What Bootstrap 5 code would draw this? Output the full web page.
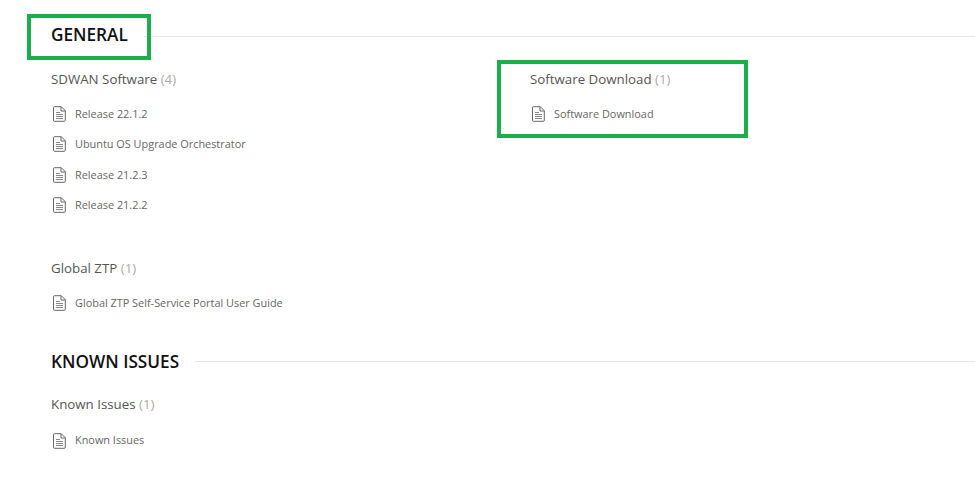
<!DOCTYPE html>
<html lang="en">
<head>
  <meta charset="UTF-8">
  <meta name="viewport" content="width=device-width, initial-scale=1.0">
  <title>Documentation</title>
  <link href="https://cdn.jsdelivr.net/npm/bootstrap@5.3.0/dist/css/bootstrap.min.css" rel="stylesheet">
  <style>
    body {
      background-color: #fff;
      font-family: "Open Sans", "Liberation Sans", sans-serif;
      overflow: hidden;
    }
    .doc-page {
      position: relative;
      height: 480px;
      padding: 22px 0 0 51px;
    }
    .sec-head {
      display: flex;
      align-items: center;
      gap: 16px;
      height: 26px;
    }
    .sec-head h2 {
      margin: 0;
      font-size: 17.2px;
      font-weight: 600;
      color: #111;
      white-space: nowrap;
    }
    .sec-head .sec-line {
      flex-grow: 1;
      height: 1px;
      margin-top: 2px;
      background-color: #e6e6e6;
    }
    .known-head { margin-top: 31px; }
    .known-head .sec-line { margin-top: -2px; }
    .cat-wrap { padding-top: 21px; }
    .cat-col {
      width: 479px;
      flex-shrink: 0;
    }
    .cat-title {
      margin: 0 0 10px;
      height: 20px;
      line-height: 20px;
      font-size: 13.3px;
      font-weight: 400;
      color: #555;
    }
    .cat-title span {
      color: #aaa;
    }
    .global-ztp { margin-top: 38px; margin-bottom: 10px; }
    .known-list { margin-top: 19px; }
    .known-list .cat-title { margin-bottom: 11px; }
    .art-row {
      display: flex;
      align-items: center;
      gap: 9px;
      height: 30.3px;
      font-size: 10.9px;
      color: #666;
    }
    .art-row svg {
      flex-shrink: 0;
      margin-left: 2px;
    }
    .green-box {
      position: absolute;
      border: 4px solid #1bae4b;
    }
    .box-general {
      left: 27px;
      top: 14px;
      width: 124px;
      height: 46px;
    }
    .box-download {
      left: 497px;
      top: 60px;
      width: 251px;
      height: 78px;
    }
  </style>
</head>
<body>
<svg width="0" height="0" class="d-block">
  <symbol id="doc-icon" viewBox="0 0 13 16">
    <path d="M1.5 .7H8.3L12.3 4.7V14.3a1 1 0 0 1-1 1H1.5a1 1 0 0 1-1-1V1.7a1 1 0 0 1 1-1Z" fill="#fff" stroke="#666" stroke-width="1"/>
    <path d="M8 .8V5H12.2" fill="none" stroke="#666" stroke-width="1"/>
    <path d="M3 6.5H7M3 8.5H10M3 10.5H10M3 12.5H10" fill="none" stroke="#888" stroke-width="1"/>
  </symbol>
</svg>
<div class="doc-page">
  <div class="sec-head">
    <h2>GENERAL</h2>
    <div class="sec-line"></div>
  </div>
  <div class="d-flex cat-wrap">
    <div class="cat-col">
      <h3 class="cat-title">SDWAN Software <span>(4)</span></h3>
      <div class="art-row"><svg width="13" height="16"><use href="#doc-icon"/></svg>Release 22.1.2</div>
      <div class="art-row"><svg width="13" height="16"><use href="#doc-icon"/></svg>Ubuntu OS Upgrade Orchestrator</div>
      <div class="art-row"><svg width="13" height="16"><use href="#doc-icon"/></svg>Release 21.2.3</div>
      <div class="art-row"><svg width="13" height="16"><use href="#doc-icon"/></svg>Release 21.2.2</div>
      <h3 class="cat-title global-ztp">Global ZTP <span>(1)</span></h3>
      <div class="art-row"><svg width="13" height="16"><use href="#doc-icon"/></svg>Global ZTP Self-Service Portal User Guide</div>
    </div>
    <div class="cat-col">
      <h3 class="cat-title">Software Download <span>(1)</span></h3>
      <div class="art-row"><svg width="13" height="16"><use href="#doc-icon"/></svg>Software Download</div>
    </div>
  </div>
  <div class="sec-head known-head">
    <h2>KNOWN ISSUES</h2>
    <div class="sec-line"></div>
  </div>
  <div class="known-list">
    <h3 class="cat-title">Known Issues <span>(1)</span></h3>
    <div class="art-row"><svg width="13" height="16"><use href="#doc-icon"/></svg>Known Issues</div>
  </div>
  <div class="green-box box-general"></div>
  <div class="green-box box-download"></div>
</div>
<script src="https://cdn.jsdelivr.net/npm/bootstrap@5.3.0/dist/js/bootstrap.bundle.min.js"></script>
</body>
</html>
